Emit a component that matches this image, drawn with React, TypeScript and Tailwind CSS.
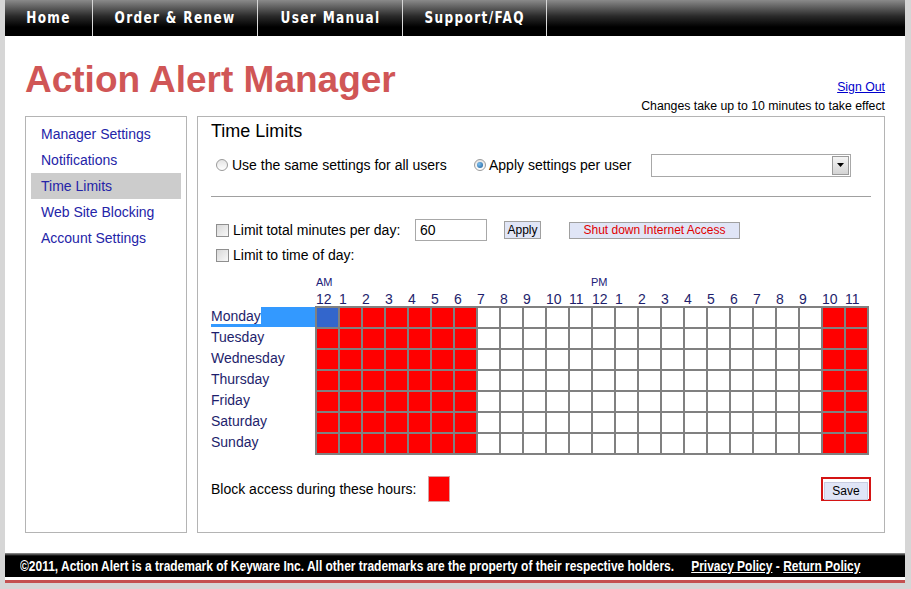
import React from "react";

const navItems = [
  { label: "Home", w: "w-[87px]" },
  { label: "Order & Renew", w: "w-[164px]" },
  { label: "User Manual", w: "w-[144px]" },
  { label: "Support/FAQ", w: "w-[143px]" },
];

const sideLinks = ["Manager Settings", "Notifications", "Time Limits", "Web Site Blocking", "Account Settings"];

const days = ["Monday", "Tuesday", "Wednesday", "Thursday", "Friday", "Saturday", "Sunday"];

const hours = ["12", "1", "2", "3", "4", "5", "6", "7", "8", "9", "10", "11", "12", "1", "2", "3", "4", "5", "6", "7", "8", "9", "10", "11"];

const isBlocked = (h: number) => h <= 6 || h >= 22;

const Radio = ({ checked }: { checked?: boolean }) => (
  <span className="w-[12px] h-[12px] rounded-full border border-[#9a9a9a] bg-[linear-gradient(to_bottom,#e4e4e4,#ffffff)] flex items-center justify-center shrink-0">
    {checked && <span className="w-[6px] h-[6px] rounded-full bg-[radial-gradient(circle_at_35%_35%,#7ec0f0,#1a5c98)]" />}
  </span>
);

const Checkbox = () => (
  <span className="w-[13px] h-[13px] border border-[#8f8f8f] bg-[linear-gradient(135deg,#d8d8d8,#f8f8f8)] shrink-0" />
);

export default function App() {
  return (
    <div className="min-h-screen bg-[#d6d6d6] font-['Liberation_Sans',Arial,sans-serif]">
      <div className="ml-[5px] w-[900px] bg-white">
        {/* top nav */}
        <div className="h-[36px] flex bg-[linear-gradient(to_bottom,#8a8a8a_0%,#2a2a2a_45%,#000_75%)]">
          {navItems.map((n) => (
            <React.Fragment key={n.label}>
              <div className={`${n.w} h-full flex items-center justify-center`}>
                <span className="inline-block whitespace-nowrap scale-x-[0.84] text-white font-bold text-[16px] tracking-[1.6px] font-['DejaVu_Sans_Condensed',sans-serif]">
                  {n.label}
                </span>
              </div>
              <div className="w-px h-full bg-[#d8d8d8]" />
            </React.Fragment>
          ))}
        </div>

        {/* header */}
        <div className="h-[80px] flex justify-between">
          <div className="pl-[20px] pt-[26px] text-[37px] leading-[36px] font-bold text-[#d05656]">Action Alert Manager</div>
          <div className="pr-[20px] pt-[44px] flex flex-col items-end text-[12.3px] leading-[14px]">
            <a href="#" className="text-[#0000cc] underline">Sign Out</a>
            <div className="mt-[5px] text-black">Changes take up to 10 minutes to take effect</div>
          </div>
        </div>

        {/* content */}
        <div className="h-[417px] flex gap-[10px] pl-[20px]">
          <div className="w-[162px] h-full border border-[#b4b4b4] pt-[4px]">
            {sideLinks.map((l) => (
              <div
                key={l}
                className={`mx-[5px] h-[26px] pl-[10px] text-[14px] leading-[26px] text-[#2424a8] ${l === "Time Limits" ? "bg-[#cccccc]" : ""}`}
              >
                {l}
              </div>
            ))}
          </div>

          <div className="w-[688px] h-full border border-[#b4b4b4] flex flex-col text-[14px] text-black">
            <div className="h-[28px] pl-[13px] flex items-center text-[18px]">Time Limits</div>

            <div className="h-[40px] pl-[18px] flex items-center">
              <Radio />
              <span className="ml-[4px] w-[242px]">Use the same settings for all users</span>
              <Radio checked />
              <span className="ml-[3px] w-[162px]">Apply settings per user</span>
              <div className="w-[200px] h-[23px] border border-[#a8a8a8] flex items-center justify-end pr-px">
                <div className="w-[17px] h-[19px] border border-[#9a9a9a] bg-[linear-gradient(to_bottom,#f4f4f4,#d4d4d4)] flex items-center justify-center">
                  <svg width="7" height="4" viewBox="0 0 7 4"><path d="M0 0h7L3.5 4z" fill="#000" /></svg>
                </div>
              </div>
            </div>

            <div className="mt-[11px] mx-[13px] h-px bg-[#a0a0a0]" />

            <div className="mt-[22px] h-[22px] pl-[18px] flex items-center">
              <Checkbox />
              <span className="ml-[4px] w-[182px]">Limit total minutes per day:</span>
              <div className="w-[72px] h-[22px] border border-[#a8a8a8] pl-[4px] leading-[20px]">60</div>
              <button className="ml-[17px] w-[37px] h-[18px] border border-[#a0a0a0] bg-[#e0e5f6] text-[12px] leading-[16px] text-black">Apply</button>
              <button className="ml-[28px] w-[171px] h-[17px] border border-[#a0a0a0] bg-[#e0e5f6] text-[12px] leading-[15px] text-[#e00000]">Shut down Internet Access</button>
            </div>

            <div className="mt-[4px] h-[20px] pl-[18px] flex items-center">
              <Checkbox />
              <span className="ml-[4px]">Limit to time of day:</span>
            </div>

            <div className="mt-[10px] h-[14px] flex pl-[117px] text-[11px] leading-[14px] text-[#202078]">
              <span className="w-[276px] pl-[1px]">AM</span>
              <span>PM</span>
            </div>
            <div className="h-[17px] pt-[3px] pl-[117px] grid grid-cols-[repeat(24,23px)] text-[14px] leading-[14px] text-[#1e1e6c]">
              {hours.map((h, i) => (
                <span key={i} className="pl-[1px]">{h}</span>
              ))}
            </div>

            <div className="flex pl-[13px]">
              <div className="w-[104px] flex flex-col text-[#1e1e6c]">
                {days.map((d, i) => (
                  <div key={d} className="relative h-[21px] leading-[20px]">
                    {i === 0 && (
                      <>
                        <div className="absolute left-[50px] right-0 top-[1px] h-[20px] bg-[#3399ff]" />
                        <div className="absolute left-0 w-[50px] bottom-0 h-[3px] bg-[#3399ff]" />
                      </>
                    )}
                    <span className="relative">{d}</span>
                  </div>
                ))}
              </div>
              <div className="grid grid-cols-[repeat(24,21px)] auto-rows-[19px] gap-[2px] p-[2px] bg-[#808080]">
                {days.map((d, r) =>
                  hours.map((_, c) => (
                    <div
                      key={`${d}-${c}`}
                      className={r === 0 && c === 0 ? "bg-[#3366cc]" : isBlocked(c) ? "bg-[#ff0000]" : "bg-white"}
                    />
                  ))
                )}
              </div>
            </div>

            <div className="mt-[21px] h-[26px] pl-[13px] pr-[13px] flex items-center">
              <span>Block access during these hours:</span>
              <div className="ml-[12px] w-[22px] h-[26px] bg-[#ff0000] border border-[#d8a0a0]" />
              <div className="ml-auto w-[50px] h-[24px] border-2 border-[#d41414] p-px">
                <button className="w-full h-full bg-[#e0e5f6] border border-[#c8cce0] text-[12px] leading-[16px]">Save</button>
              </div>
            </div>
          </div>
        </div>

        <div className="h-[20px]" />

        {/* footer */}
        <div className="h-[24px] bg-[linear-gradient(to_bottom,#9a9a9a_0px,#000_3px,#000_100%)] flex items-center pl-[15px] pt-[2px] overflow-hidden">
          <div className="inline-block origin-left scale-x-[0.855] whitespace-nowrap text-white font-bold text-[14px] leading-[16px]">
            <span>©2011, Action Alert is a trademark of Keyware Inc. All other trademarks are the property of their respective holders.</span>
            <a href="#" className="ml-[20px] underline">Privacy Policy</a>
            <span className="mx-[4px]">-</span>
            <a href="#" className="underline">Return Policy</a>
          </div>
        </div>
        <div className="h-[3px]" />
        <div className="h-[3px] bg-[#c45050]" />
      </div>
    </div>
  );
}
